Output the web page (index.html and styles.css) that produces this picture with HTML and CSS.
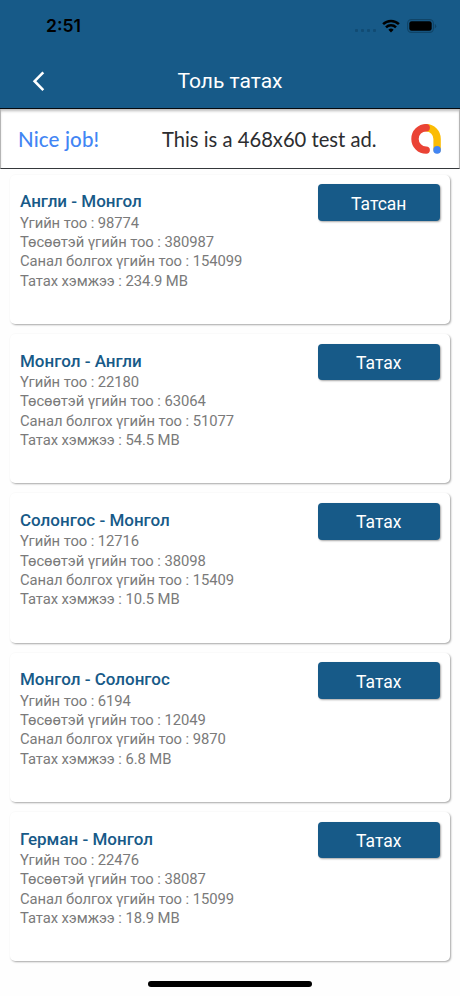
FILE: index.html
```html
<!DOCTYPE html>
<html lang="mn">
<head>
  <meta charset="UTF-8">
  <title>Толь татах</title>
  <meta name="viewport" content="width=device-width, initial-scale=1.0">
  <link rel="stylesheet" href="styles.css">
</head>
<body>
  <header class="header">
    <div class="status-bar">
      <span class="time">2:51</span>
      <div class="status-icons">
        <div class="signal"><i></i><i></i><i></i><i></i></div>
        <svg class="wifi" width="18" height="14" viewBox="0 0 18 14" fill="none" stroke="#000" stroke-width="2.5">
          <path d="M1.1 5.2a11.3 11.3 0 0 1 15.8 0"/>
          <path d="M4 8.3a7.1 7.1 0 0 1 10 0"/>
          <path d="M9 13.4 6.4 10.8a3.7 3.7 0 0 1 5.2 0z" fill="#000" stroke="none"/>
        </svg>
        <svg class="battery" width="30" height="14" viewBox="0 0 30 14">
          <rect x=".6" y=".6" width="25.8" height="12.8" rx="3.8" fill="none" stroke="#104467" stroke-width="1.1"/>
          <rect x="2.3" y="2.3" width="22.4" height="9.4" rx="2.3"/>
          <path d="M27.8 5v4.4a2.4 2.4 0 0 0 0-4.4z" fill="#104467"/>
        </svg>
      </div>
    </div>
    <nav class="nav">
      <svg class="back" width="14" height="22" viewBox="0 0 14 22" fill="none" stroke="#fff" stroke-width="2.6">
        <path d="M11.3 2.3 2.6 11.2l8.7 8.9"/>
      </svg>
      <h1>Толь татах</h1>
    </nav>
  </header>

  <div class="ad">
    <span class="ad-label">Nice job!</span>
    <span class="ad-text">This is a 468x60 test ad.</span>
    <svg class="ad-logo" width="32" height="32" viewBox="0 0 32 32" fill="none" stroke-width="7.4" stroke-linecap="round">
      <path d="M16.2 4.7A11.2 11.2 0 0 1 27.1 16v10.5" stroke="#fbbc04"/>
      <path d="M16.2 4.7a11.2 11.2 0 0 0 0 22.4" stroke="#ea4335"/>
      <circle cx="27.1" cy="26.9" r="3.8" fill="#4285f4"/>
    </svg>
  </div>

  <main class="list">
    <section class="card">
      <div class="info">
        <h2>Англи - Монгол</h2>
        <p>Үгийн тоо : 98774</p>
        <p>Төсөөтэй үгийн тоо : 380987</p>
        <p>Санал болгох үгийн тоо : 154099</p>
        <p>Татах хэмжээ : 234.9 MB</p>
      </div>
      <button class="btn">Татсан</button>
    </section>
    <section class="card">
      <div class="info">
        <h2>Монгол - Англи</h2>
        <p>Үгийн тоо : 22180</p>
        <p>Төсөөтэй үгийн тоо : 63064</p>
        <p>Санал болгох үгийн тоо : 51077</p>
        <p>Татах хэмжээ : 54.5 MB</p>
      </div>
      <button class="btn">Татах</button>
    </section>
    <section class="card">
      <div class="info">
        <h2>Солонгос - Монгол</h2>
        <p>Үгийн тоо : 12716</p>
        <p>Төсөөтэй үгийн тоо : 38098</p>
        <p>Санал болгох үгийн тоо : 15409</p>
        <p>Татах хэмжээ : 10.5 MB</p>
      </div>
      <button class="btn">Татах</button>
    </section>
    <section class="card">
      <div class="info">
        <h2>Монгол - Солонгос</h2>
        <p>Үгийн тоо : 6194</p>
        <p>Төсөөтэй үгийн тоо : 12049</p>
        <p>Санал болгох үгийн тоо : 9870</p>
        <p>Татах хэмжээ : 6.8 MB</p>
      </div>
      <button class="btn">Татах</button>
    </section>
    <section class="card">
      <div class="info">
        <h2>Герман - Монгол</h2>
        <p>Үгийн тоо : 22476</p>
        <p>Төсөөтэй үгийн тоо : 38087</p>
        <p>Санал болгох үгийн тоо : 15099</p>
        <p>Татах хэмжээ : 18.9 MB</p>
      </div>
      <button class="btn">Татах</button>
    </section>
  </main>

  <div class="home-indicator"></div>
</body>
</html>
```
FILE: styles.css
```css
/* Reset & base */
*, *::before, *::after {
  box-sizing: border-box;
}
body {
  margin: 0;
  height: 996px;
  overflow: hidden;
  display: flex;
  flex-direction: column;
  background: #fefefe;
  font-family: Roboto, sans-serif;
}
h1, h2, p {
  margin: 0;
}
svg {
  display: block;
  flex: none;
}

/* Header */
.header {
  height: 109px;
  flex: none;
  background: #175a88;
  border-bottom: 1px solid #05090d;
  color: #fff;
}
.status-bar {
  height: 52px;
  padding: 0 23px 0 46px;
  display: flex;
  align-items: center;
  justify-content: space-between;
}
.time {
  color: #000;
  font: 600 17.5px/20px Inter, sans-serif;
}
.status-icons {
  display: flex;
  align-items: center;
}
.signal {
  display: flex;
  gap: 3px;
  margin: 8px 6px 0 0;
}
.signal i {
  width: 3px;
  height: 3px;
  border-radius: 1px;
  background: #114b73;
}
.wifi {
  margin-right: 7px;
}
.nav {
  height: 56px;
  padding: 2px 32px 0;
  display: grid;
  grid-template-columns: 14px 1fr 14px;
  align-items: center;
}
.nav h1 {
  font-size: 21px;
  font-weight: 400;
  line-height: 26px;
  text-align: center;
}

/* Ad banner */
.ad {
  height: 60px;
  flex: none;
  padding: 1px 17px 0;
  display: flex;
  align-items: center;
  background: #fff;
  border: 1px solid #b5b5b5;
  border-top: 0;
  border-bottom: 1.5px solid #35383b;
  box-shadow: inset 0 3px 3px -1px #bbb;
  font-family: Lato, sans-serif;
  font-size: 20.2px;
  color: #2c2d30;
}
.ad-label {
  width: 144px;
  color: #4285f4;
  font-size: 20.5px;
  font-weight: 500;
  letter-spacing: 0.15px;
}
.ad-logo {
  margin-left: auto;
}

/* Dictionary cards */
.list {
  padding: 5.7px 10px 0;
  display: flex;
  flex-direction: column;
  gap: 10px;
}
.card {
  height: 149.3px;
  flex: none;
  padding: 9.8px 10px 10px;
  display: flex;
  justify-content: space-between;
  align-items: flex-start;
  background: #fff;
  border-radius: 5px;
  box-shadow: 1px 1px 2px rgba(0, 0, 0, 0.35);
}
.info {
  padding-top: 6px;
}
.info h2 {
  color: #175a88;
  font-size: 17px;
  font-weight: 500;
  line-height: 22px;
  margin-bottom: 1.2px;
}
.info p {
  color: #7a7a7a;
  font-size: 14.8px;
  line-height: 19.35px;
  letter-spacing: -0.07px;
  white-space: nowrap;
}
.btn {
  width: 122.5px;
  height: 36.5px;
  padding: 2px 0 0;
  border: 0;
  border-radius: 4px;
  background: #175a88;
  box-shadow: 1px 1px 2px rgba(0, 0, 0, 0.35);
  color: #fff;
  font: 400 17.5px/24px Roboto, sans-serif;
}

/* Home indicator */
.home-indicator {
  width: 164px;
  height: 6px;
  margin: auto auto 9px;
  flex: none;
  border-radius: 3px;
  background: #000;
}
```
